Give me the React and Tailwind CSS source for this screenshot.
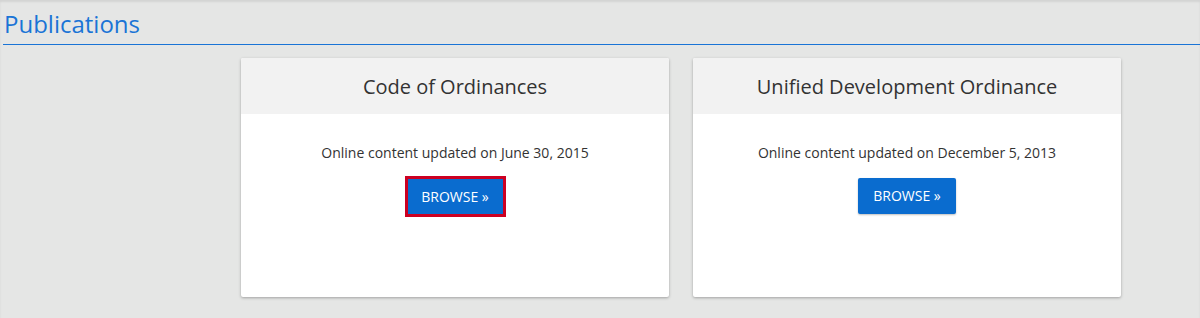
const publications = [
  { title: "Code of Ordinances", updated: "June 30, 2015", focused: true },
  { title: "Unified Development Ordinance", updated: "December 5, 2013" },
];

const PubCard = ({ title, updated, focused }) => {
  return (
    <div className="w-[428px] h-[239px] bg-white rounded-[2px] shadow-[0_1px_3px_rgba(0,0,0,0.3)] flex flex-col">
      <div className="h-[56px] bg-[#f2f2f2] flex items-center justify-center rounded-t-[2px]">
        <h3 className="text-[20px] text-[#333] leading-none pt-[1px]">{title}</h3>
      </div>
      <div className="flex flex-col items-center pt-[29px]">
        <p className="text-[14px] text-[#333] leading-[20px]">
          Online content updated on {updated}
        </p>
        {focused ? (
          <div className="mt-[13px] border-[3px] border-[#cc0022]">
            <button className="h-[35px] w-[95px] bg-[#0a6ccf] text-white text-[14px] leading-[35px]">
              BROWSE »
            </button>
          </div>
        ) : (
          <button className="mt-[15px] h-[36px] w-[98px] bg-[#0a6ccf] text-white text-[14px] leading-[36px] rounded-[2px] shadow-[0_1px_2px_rgba(0,0,0,0.25)]">
            BROWSE »
          </button>
        )}
      </div>
    </div>
  );
};

const App = () => {
  return (
    <div
      className="w-[1200px] h-[318px] bg-[#e5e6e5] shadow-[inset_0_2px_2px_rgba(0,0,0,0.08)]"
      style={{ fontFamily: '"Open Sans", "Liberation Sans", sans-serif' }}
    >
      <div className="pl-[3px] pt-[8px]">
        <h2 className="text-[24px] leading-[32px] text-[#1a74d6] pl-[1px] pb-[4px]">
          Publications
        </h2>
        <div className="h-px bg-[#1a74d6]" />
      </div>
      <div className="flex gap-[24px] pl-[241px] pt-[13px]">
        {publications.map((p, i) => (
          <PubCard key={i} {...p} />
        ))}
      </div>
    </div>
  );
};

export default App;
